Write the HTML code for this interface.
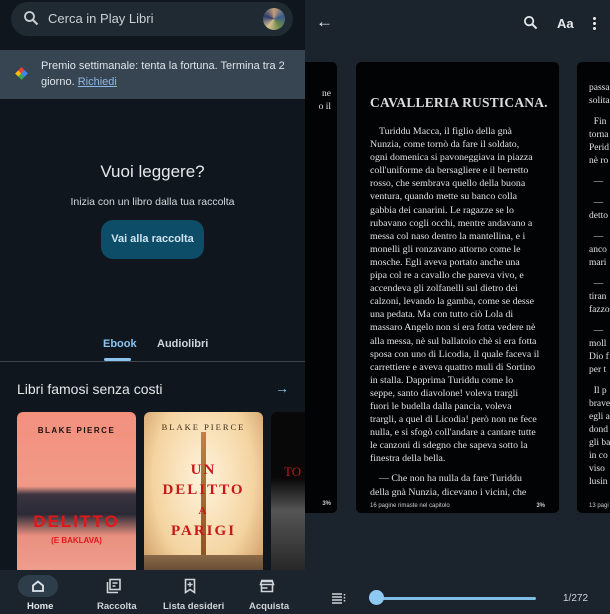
<!DOCTYPE html>
<html><head><meta charset="utf-8"><style>
*{margin:0;padding:0;box-sizing:border-box}
body{width:610px;height:614px;overflow:hidden;background:#1b232d;font-family:"Liberation Sans",sans-serif;position:relative}
.abs{position:absolute}
#left{left:0;top:0;width:305px;height:614px;background:#10161d;overflow:hidden}
#right{left:305px;top:0;width:305px;height:614px;background:#1b232d;overflow:hidden}
.card{position:absolute;background:#020304;border-radius:5px;top:62px;height:451px}
.ser{font-family:"Liberation Serif",serif;color:#e2e2e2;font-size:9.9px;line-height:16.3px}
.ser p{text-indent:9px}
</style></head><body>
<div id="left" class="abs">
  <div class="abs" style="left:11px;top:2px;width:282px;height:34px;border-radius:17px;background:#1f2a33"></div>
  <svg class="abs" style="left:23px;top:10px" width="16" height="16" viewBox="0 0 16 16"><circle cx="6.5" cy="6.5" r="4.5" fill="none" stroke="#c8d0d6" stroke-width="1.8"/><path d="M10 10l4.5 4.5" stroke="#c8d0d6" stroke-width="2"/></svg>
  <div class="abs" style="left:48px;top:11px;font-size:13px;color:#c9d0d6">Cerca in Play Libri</div>
  <div class="abs" style="left:263px;top:8px;width:22px;height:22px;border-radius:50%;background:conic-gradient(#c6a07a,#3a5a8a,#6a8a4a,#d8c090,#2a3a6a,#c6a07a)"></div>
  <div class="abs" style="left:0;top:50px;width:305px;height:49px;background:#364551"></div>
  <div class="abs" style="left:17px;top:69px;width:9px;height:9px;transform:rotate(45deg);background:conic-gradient(#4285f4 0 25%,#34a853 0 50%,#fbbc05 0 75%,#ea4335 0)"></div>
  <div class="abs" style="left:41px;top:59px;width:250px;font-size:11px;line-height:15.5px;color:#dfe5ea">Premio settimanale: tenta la fortuna. Termina tra 2 giorno. <span style="color:#8ab8e6;text-decoration:underline">Richiedi</span></div>
  <div class="abs" style="left:0;top:162px;width:305px;text-align:center;font-size:17px;color:#e5e9ec">Vuoi leggere?</div>
  <div class="abs" style="left:0;top:196px;width:305px;text-align:center;font-size:10.5px;color:#d4d9dd">Inizia con un libro dalla tua raccolta</div>
  <div class="abs" style="left:101px;top:220px;width:103px;height:39px;border-radius:12px;background:#0e4d68;color:#cfe4f0;font-size:11px;font-weight:bold;text-align:center;line-height:39px">Vai alla raccolta</div>
  <div class="abs" style="left:103px;top:338px;font-size:11px;font-weight:bold;color:#8cc4ee">Ebook</div>
  <div class="abs" style="left:157px;top:338px;font-size:11px;font-weight:bold;color:#cfd5da">Audiolibri</div>
  <div class="abs" style="left:104px;top:358px;width:27px;height:3px;border-radius:2px;background:#8cc4ee"></div>
  <div class="abs" style="left:0;top:361px;width:305px;height:1px;background:#3b4650"></div>
  <div class="abs" style="left:17px;top:381px;font-size:14px;color:#e3e7ea">Libri famosi senza costi</div>
  <div class="abs" style="left:275px;top:380px;font-size:14px;color:#8cc4ee">→</div>
  <div class="abs" style="left:17px;top:412px;width:119px;height:165px;border-radius:6px;overflow:hidden;background:linear-gradient(#f3907e 0%,#f09a86 45%,#3a3440 50%,#2a2a36 62%,#e89080 75%,#f0a090 100%)">
    <div style="position:absolute;top:14px;width:100%;text-align:center;font-size:8px;font-weight:bold;letter-spacing:1.5px;color:#1a1010">BLAKE PIERCE</div>
    <div style="position:absolute;top:100px;width:100%;text-align:center;font-size:17px;font-weight:bold;letter-spacing:2px;color:#e01818">DELITTO</div>
    <div style="position:absolute;top:124px;width:100%;text-align:center;font-size:8px;font-weight:bold;color:#e01818">(E BAKLAVA)</div>
  </div>
  <div class="abs" style="left:144px;top:412px;width:119px;height:165px;border-radius:6px;overflow:hidden;background:radial-gradient(ellipse at 50% 40%,#fff3dc,#f4d4a0 60%,#c8925a 100%)">
    <div style="position:absolute;top:10px;width:100%;text-align:center;font-family:'Liberation Serif',serif;font-size:8.5px;letter-spacing:2px;color:#402818">BLAKE PIERCE</div>
    <div style="position:absolute;left:57px;top:20px;width:5px;height:135px;background:linear-gradient(#c08048,#8a5020)"></div>
    <div style="position:absolute;top:48px;width:100%;text-align:center;font-family:'Liberation Serif',serif;font-weight:bold;font-size:15px;letter-spacing:2px;line-height:20px;color:#c81818">UN<br>DELITTO<br><span style="font-size:11px">A</span><br>PARIGI</div>
    <div style="position:absolute;bottom:0;width:100%;height:22px;background:linear-gradient(#8a6a48,#5a4030)"></div>
  </div>
  <div class="abs" style="left:271px;top:412px;width:40px;height:165px;border-radius:6px;background:linear-gradient(#080808 40%,#555 60%,#222 100%)">
    <div style="position:absolute;left:13px;top:52px;font-family:'Liberation Serif',serif;font-size:13px;color:#c01818">TO</div>
  </div>
  <div class="abs" style="left:0;top:570px;width:305px;height:44px;background:#1b232c"></div>
  <div class="abs" style="left:18px;top:575px;width:40px;height:22px;border-radius:11px;background:#2e3d4a"></div>
  <svg class="abs" style="left:31px;top:579px" width="14" height="14" viewBox="0 0 14 14"><path d="M2 6.5L7 2.5l5 4V12H2z" fill="none" stroke="#dfe5ea" stroke-width="1.8"/></svg>
  <svg class="abs" style="left:106px;top:578px" width="16" height="16" viewBox="0 0 16 16"><rect x="4" y="1.5" width="10" height="10" fill="none" stroke="#cfd5da" stroke-width="1.6"/><path d="M1.5 4v10.5H12" fill="none" stroke="#cfd5da" stroke-width="1.6"/><path d="M6.5 5h5M6.5 8h3" stroke="#cfd5da" stroke-width="1.4"/></svg>
  <svg class="abs" style="left:184px;top:578px" width="12" height="16" viewBox="0 0 12 16"><path d="M1.5 1.5h9v13l-4.5-3-4.5 3z" fill="none" stroke="#cfd5da" stroke-width="1.6"/><path d="M6 4v5M3.5 6.5h5" stroke="#cfd5da" stroke-width="1.4"/></svg>
  <svg class="abs" style="left:259px;top:578px" width="16" height="16" viewBox="0 0 16 16"><path d="M2 2.5h12M1.5 6.5l1-3h11l1 3zM2.5 6.5v7h11v-7M2.5 10h6" fill="none" stroke="#cfd5da" stroke-width="1.6"/></svg>
  <div class="abs" style="left:27px;top:601px;font-size:9.5px;font-weight:bold;color:#e3e7ea">Home</div>
  <div class="abs" style="left:97px;top:601px;font-size:9.5px;font-weight:bold;color:#cfd5da">Raccolta</div>
  <div class="abs" style="left:163px;top:601px;font-size:9.5px;font-weight:bold;color:#cfd5da">Lista desideri</div>
  <div class="abs" style="left:249px;top:601px;font-size:9.5px;font-weight:bold;color:#cfd5da">Acquista</div>
</div>
<div id="right" class="abs">
  <div class="abs" style="left:11px;top:12px;font-size:17px;color:#e5e9ec">←</div>
  <svg class="abs" style="left:218px;top:15px" width="15" height="15" viewBox="0 0 16 16"><circle cx="6.5" cy="6.5" r="4.5" fill="none" stroke="#e5e9ec" stroke-width="1.9"/><path d="M10 10l4.5 4.5" stroke="#e5e9ec" stroke-width="2.1"/></svg>
  <div class="abs" style="left:252px;top:16px;font-size:13px;font-weight:bold;color:#e5e9ec">Aa</div>
  <div class="abs" style="left:288px;top:16px;width:3px;height:14px;background:radial-gradient(circle,#e5e9ec 1.4px,transparent 1.6px) 0 0/3px 5px"></div>
  <div class="card" style="left:-20px;width:52px">
    <div class="ser" style="position:absolute;left:-4px;top:26px;width:50px;text-align:right;font-size:9.5px;line-height:13px">ne<br>o il</div>
    <div style="position:absolute;right:6px;top:439px;font-size:6px;color:#ccc;font-weight:bold">3%</div>
  </div>
  <div class="card" style="left:51px;width:203px">
    <div style="position:absolute;left:14px;top:33px;width:180px;font-family:'Liberation Serif',serif;font-weight:bold;font-size:13.5px;color:#dcdcdc;letter-spacing:0.2px">CAVALLERIA RUSTICANA.</div>
    <div class="ser" style="position:absolute;left:14px;top:63px;width:185px;line-height:13.1px">
      <p style="white-space:nowrap">Turiddu Macca, il figlio della gnà<br>Nunzia, come tornò da fare il soldato,<br>ogni domenica si pavoneggiava in piazza<br>coll'uniforme da bersagliere e il berretto<br>rosso, che sembrava quello della buona<br>ventura, quando mette su banco colla<br>gabbia dei canarini. Le ragazze se lo<br>rubavano cogli occhi, mentre andavano a<br>messa col naso dentro la mantellina, e i<br>monelli gli ronzavano attorno come le<br>mosche. Egli aveva portato anche una<br>pipa col re a cavallo che pareva vivo, e<br>accendeva gli zolfanelli sul dietro dei<br>calzoni, levando la gamba, come se desse<br>una pedata. Ma con tutto ciò Lola di<br>massaro Angelo non si era fotta vedere nè<br>alla messa, nè sul ballatoio chè si era fotta<br>sposa con uno di Licodia, il quale faceva il<br>carrettiere e aveva quattro muli di Sortino<br>in stalla. Dapprima Turiddu come lo<br>seppe, santo diavolone! voleva trargli<br>fuori le budella dalla pancia, voleva<br>trargli, a quel di Licodia! però non ne fece<br>nulla, e si sfogò coll'andare a cantare tutte<br>le canzoni di sdegno che sapeva sotto la<br>finestra della bella.</p>
      <p style="margin-top:7px;white-space:nowrap">— Che non ha nulla da fare Turiddu</p>
      <div style="white-space:nowrap">della gnà Nunzia, dicevano i vicini, che</div>
    </div>
    <div style="position:absolute;left:14px;top:441px;font-size:6px;color:#ccc">16 pagine rimaste nel capitolo</div>
    <div style="position:absolute;right:14px;top:441px;font-size:6px;color:#ccc;font-weight:bold">3%</div>
  </div>
  <div class="card" style="left:272px;width:60px">
    <div class="ser" style="position:absolute;left:12px;top:20px;width:60px;white-space:nowrap;font-size:9.5px;line-height:13px">passa<br>solita<br><div style="height:8px"></div>&nbsp;&nbsp;Fin<br>torna<br>Perid<br>nè ro<br><div style="height:8px"></div>&nbsp;&nbsp;—<br><div style="height:8px"></div>&nbsp;&nbsp;—<br>detto<br><div style="height:8px"></div>&nbsp;&nbsp;—<br>anco<br>mari<br><div style="height:8px"></div>&nbsp;&nbsp;—<br>tiran<br>fazzo<br><div style="height:8px"></div>&nbsp;&nbsp;—<br>moll<br>Dio f<br>per t<br><div style="height:8px"></div>&nbsp;&nbsp;Il p<br>brave<br>egli a<br>dond<br>gli ba<br>in co<br>viso<br>lusin</div>
    <div style="position:absolute;left:12px;top:441px;font-size:6px;color:#ccc">13 pagi</div>
  </div>
  <svg class="abs" style="left:27px;top:593px" width="14" height="11" viewBox="0 0 14 11"><path d="M0 1h10M0 4h10M0 7h10M0 10h10" stroke="#cfd5da" stroke-width="1.5"/><path d="M12.5 1v1.5M12.5 4v1.5M12.5 7v1.5" stroke="#cfd5da" stroke-width="1.5"/></svg>
  <div class="abs" style="left:72px;top:597px;width:159px;height:3px;border-radius:2px;background:#7fbde6"></div>
  <div class="abs" style="left:64px;top:590px;width:15px;height:15px;border-radius:50%;background:#8fcaf2"></div>
  <div class="abs" style="left:258px;top:593px;font-size:10px;color:#cfd5da">1/272</div>
</div>
</body></html>
